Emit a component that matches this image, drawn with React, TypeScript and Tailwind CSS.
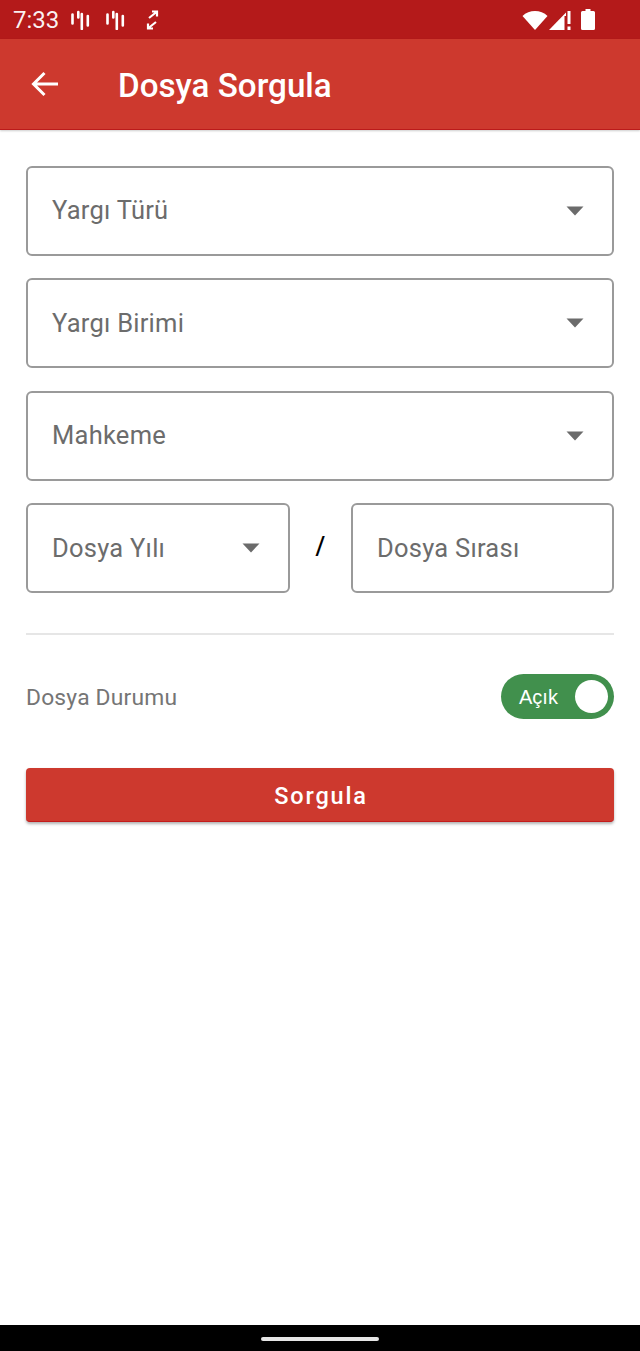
function Caret() {
  return (
    <svg width="18" height="10" viewBox="0 0 18 10" className="shrink-0">
      <path d="M0.5 0.5H17.5L9 9.5Z" fill="#6b6b6b" />
    </svg>
  );
}

function Field({ label, caret = true, className = "" }: { label: string; caret?: boolean; className?: string }) {
  return (
    <div className={`h-[90px] border-2 border-[#9a9a9a] rounded-[6px] flex items-center justify-between pl-[24px] pr-[28px] ${className}`}>
      <span className="text-[25.5px] leading-none text-[#6c6c6c] tracking-[0.25px] pt-[0.5px]">{label}</span>
      {caret && <Caret />}
    </div>
  );
}

function Candles() {
  return (
    <svg width="19" height="20" viewBox="0 0 19 20" fill="none" stroke="#fff" strokeWidth="2.6" strokeLinecap="round">
      <path d="M1.5 4.5V13.5M7.3 2V7.5M10.8 4V19M16.8 6V15.5" />
    </svg>
  );
}

export default function App() {
  return (
    <div className="w-[640px] h-[1351px] flex flex-col bg-white font-['Roboto',sans-serif]">
      <div className="h-[39px] bg-[#b41a1a] shrink-0 flex items-center pl-[13px] pr-[45px] text-white">
        <span className="text-[24px] leading-none text-white/95 w-[44px] mr-[14px]">7:33</span>
        <span className="mr-[16px] flex"><Candles /></span>
        <span className="mr-[21px] flex"><Candles /></span>
        <svg width="13" height="20" viewBox="0 0 13 20" fill="none" stroke="#fff" strokeWidth="2.2">
          <path d="M3 8L10.5 2M6 1.5H11V6.5M10 12L2.5 18M7 18.5H2V13.5" />
        </svg>
        <div className="ml-auto flex items-center">
          <svg width="26" height="20" viewBox="0 0 26 20" className="mr-[1px]">
            <path d="M0.5 6C7 -0.8 19 -0.8 25.5 6L13 20Z" fill="#fff" />
          </svg>
          <svg width="22" height="20" viewBox="0 0 22 20" className="mr-[10px]">
            <path d="M0 20L17 2.5V20Z" fill="#fff" />
            <path d="M18.5 1H21.5V14H18.5ZM18.5 16.5H21.5V20H18.5Z" fill="#fff" />
            <path d="M15.5 6H17.5V20H15.5Z" fill="#b41a1a" />
          </svg>
          <svg width="14" height="21" viewBox="0 0 14 21">
            <path d="M4.5 0H9.5V2H12.5Q14 2 14 3.5V19.5Q14 21 12.5 21H1.5Q0 21 0 19.5V3.5Q0 2 1.5 2H4.5Z" fill="#fff" />
          </svg>
        </div>
      </div>

      <div className="h-[91px] bg-[#cd392e] shrink-0 flex items-center border-b border-[#bb1a1a] shadow-[0_1px_2px_rgba(0,0,0,0.2)] pl-[31px] pt-[4px]">
        <svg width="28" height="26" viewBox="0 0 28 26" fill="none" stroke="#fff" strokeWidth="3" className="mr-[59px] mb-[5px]">
          <path d="M27 13H3M13.5 2L2.5 13L13.5 24" />
        </svg>
        <span className="text-[33.2px] leading-none font-medium text-white">Dosya Sorgula</span>
      </div>

      <div className="flex-1 flex flex-col px-[26px] pt-[35.5px]">
        <div className="flex flex-col gap-[22.5px]">
          <Field label="Yargı Türü" />
          <Field label="Yargı Birimi" />
          <Field label="Mahkeme" />
          <div className="flex items-center">
            <Field label="Dosya Yılı" className="w-[264px]" />
            <span className="flex-1 text-center text-[25px] leading-none text-black font-medium pb-[4px]">/</span>
            <Field label="Dosya Sırası" caret={false} className="w-[263px]" />
          </div>
        </div>
        <div className="h-[2px] bg-[#e6e6e6] mt-[39.5px]" />
        <div className="flex items-center justify-between mt-[39px] h-[45px]">
          <span className="text-[22.8px] leading-none text-[#757575] tracking-[0.2px] pt-[5px]">Dosya Durumu</span>
          <div className="w-[113px] h-[45px] rounded-full bg-[#41904d] flex items-center justify-between pl-[18px] pr-[6px]">
            <span className="text-[20px] leading-none text-white font-['Liberation_Sans',sans-serif] pt-[2px]">Açık</span>
            <span className="w-[33px] h-[33px] rounded-full bg-white" />
          </div>
        </div>
        <button className="mt-[49px] h-[54px] rounded-[4px] bg-[#cd392e] border-b border-[#c41c1c] shadow-[0_2px_3px_rgba(0,0,0,0.3)] text-white text-[23.5px] font-medium tracking-[1.8px] flex items-center justify-center pt-[5px] pl-[2px]">
          Sorgula
        </button>
      </div>

      <div className="h-[26px] bg-black shrink-0 flex justify-center pt-[12px]">
        <div className="w-[118px] h-[4px] rounded-full bg-[#e6e6e6]" />
      </div>
    </div>
  );
}
